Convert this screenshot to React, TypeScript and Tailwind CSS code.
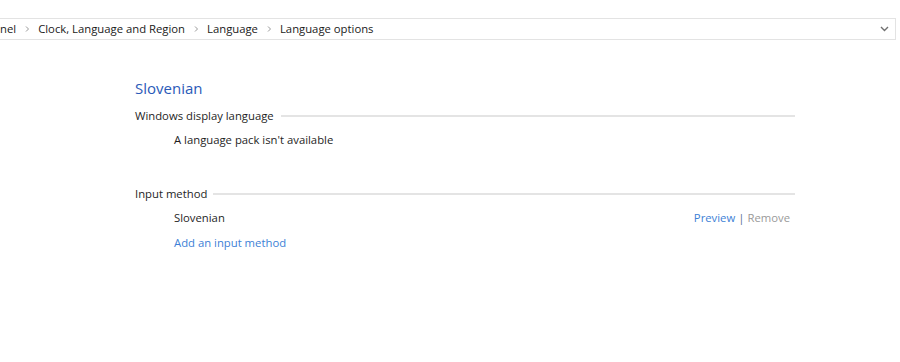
import React from "react";

const Sep = () => (
  <svg width="6" height="8" viewBox="0 0 6 8" className="shrink-0">
    <path d="M2 1.5 L4.5 4 L2 6.5" fill="none" stroke="#9a9a9a" strokeWidth="1" />
  </svg>
);

export default function App() {
  const font = { fontFamily: '"Segoe UI", "Open Sans", "Noto Sans", sans-serif' };
  return (
    <div className="w-[900px] h-[362px] bg-white text-[11.3px] text-[#1e1e1e] overflow-hidden" style={font}>
      <div className="h-[18px]" />
      <div className="flex h-[22px] w-[896px] items-center border-y border-r border-[#e3e3e3]">
        <div className="flex flex-1 items-center gap-[8px] text-[11.3px] text-[#1a1a1a]">
          <span>nel</span>
          <Sep />
          <span>Clock, Language and Region</span>
          <Sep />
          <span>Language</span>
          <Sep />
          <span>Language options</span>
        </div>
        <div className="flex w-[22px] items-center justify-center">
          <svg width="9" height="6" viewBox="0 0 9 6">
            <path d="M1 1 L4.5 4.5 L8 1" fill="none" stroke="#707070" strokeWidth="1.4" />
          </svg>
        </div>
      </div>

      <div className="ml-[135px] w-[660px]">
        <div className="mt-[38px] text-[15px] leading-[20px] text-[#2a5ab8]">Slovenian</div>
        <div className="mt-[10px] flex items-center gap-[7px]">
          <span className="leading-[16px]">Windows display language</span>
          <div className="h-[2px] flex-1 bg-[#e4e4e4]" />
        </div>
        <div className="ml-[39px] mt-[8px] leading-[16px]">A language pack isn't available</div>

        <div className="mt-[38px] flex items-center gap-[6px]">
          <span className="leading-[16px]">Input method</span>
          <div className="h-[2px] flex-1 bg-[#e4e4e4]" />
        </div>
        <div className="ml-[39px] mt-[8px] flex items-center justify-between pr-[5px] leading-[16px]">
          <span>Slovenian</span>
          <span className="flex items-center gap-[3px]">
            <span className="text-[#3d7fd6]">Preview</span>
            <span className="text-[#5a6c8c]">|</span>
            <span className="text-[#9a9a9a]">Remove</span>
          </span>
        </div>
        <div className="ml-[39px] mt-[9px] leading-[16px] text-[#3d7fd6]">Add an input method</div>
      </div>
    </div>
  );
}
